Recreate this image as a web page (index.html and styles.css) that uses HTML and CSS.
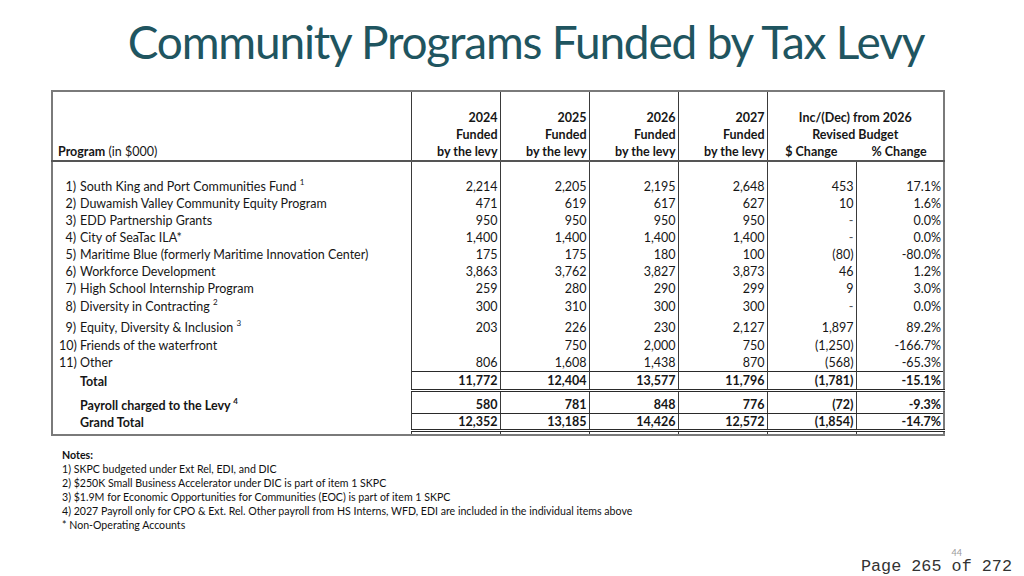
FILE: index.html
```html
<!DOCTYPE html>
<html>
<head>
<meta charset="utf-8">
<link rel="stylesheet" href="styles.css">
</head>
<body>
<div class="slide">
  <header class="title-bar">
    <h1 class="title">Community Programs Funded by Tax Levy</h1>
  </header>

  <table class="levy">
    <colgroup>
      <col class="c-label">
      <col class="c-num"><col class="c-num"><col class="c-num"><col class="c-num"><col class="c-num">
      <col class="c-pct">
    </colgroup>
    <thead>
      <tr class="head">
        <th class="h-label"><b>Program</b> (in $000)</th>
        <th class="h-num"><div>2024</div><div>Funded</div><div>by the levy</div></th>
        <th class="h-num"><div>2025</div><div>Funded</div><div>by the levy</div></th>
        <th class="h-num"><div>2026</div><div>Funded</div><div>by the levy</div></th>
        <th class="h-num"><div>2027</div><div>Funded</div><div>by the levy</div></th>
        <th class="h-chg" colspan="2">
          <div>Inc/(Dec) from 2026</div>
          <div>Revised Budget</div>
          <div class="chg-split"><span>$ Change</span><span>% Change</span></div>
        </th>
      </tr>
    </thead>
    <tbody>
      <tr class="spacer"><td></td><td></td><td></td><td></td><td></td><td></td><td></td></tr>
      <tr><td class="lbl"><span class="n">1)</span>South King and Port Communities Fund <sup>1</sup></td><td>2,214</td><td>2,205</td><td>2,195</td><td>2,648</td><td>453</td><td>17.1%</td></tr>
      <tr><td class="lbl"><span class="n">2)</span>Duwamish Valley Community Equity Program</td><td>471</td><td>619</td><td>617</td><td>627</td><td>10</td><td>1.6%</td></tr>
      <tr><td class="lbl"><span class="n">3)</span>EDD Partnership Grants</td><td>950</td><td>950</td><td>950</td><td>950</td><td class="dash">-</td><td>0.0%</td></tr>
      <tr><td class="lbl"><span class="n">4)</span>City of SeaTac ILA*</td><td>1,400</td><td>1,400</td><td>1,400</td><td>1,400</td><td class="dash">-</td><td>0.0%</td></tr>
      <tr><td class="lbl"><span class="n">5)</span>Maritime Blue (formerly Maritime Innovation Center)</td><td>175</td><td>175</td><td>180</td><td>100</td><td>(80)</td><td>-80.0%</td></tr>
      <tr><td class="lbl"><span class="n">6)</span>Workforce Development</td><td>3,863</td><td>3,762</td><td>3,827</td><td>3,873</td><td>46</td><td>1.2%</td></tr>
      <tr><td class="lbl"><span class="n">7)</span>High School Internship Program</td><td>259</td><td>280</td><td>290</td><td>299</td><td>9</td><td>3.0%</td></tr>
      <tr class="r8"><td class="lbl"><span class="n">8)</span>Diversity in Contracting <sup>2</sup></td><td>300</td><td>310</td><td>300</td><td>300</td><td class="dash">-</td><td>0.0%</td></tr>
      <tr class="r9"><td class="lbl"><span class="n">9)</span>Equity, Diversity &amp; Inclusion <sup>3</sup></td><td>203</td><td>226</td><td>230</td><td>2,127</td><td>1,897</td><td>89.2%</td></tr>
      <tr class="r10"><td class="lbl"><span class="n">10)</span>Friends of the waterfront</td><td></td><td>750</td><td>2,000</td><td>750</td><td>(1,250)</td><td>-166.7%</td></tr>
      <tr><td class="lbl"><span class="n">11)</span>Other</td><td>806</td><td>1,608</td><td>1,438</td><td>870</td><td>(568)</td><td>-65.3%</td></tr>
      <tr class="total"><td class="lbl"><span class="n"></span>Total</td><td>11,772</td><td>12,404</td><td>13,577</td><td>11,796</td><td>(1,781)</td><td>-15.1%</td></tr>
      <tr class="payroll"><td class="lbl"><span class="n"></span>Payroll charged to the Levy <sup>4</sup></td><td>580</td><td>781</td><td>848</td><td>776</td><td>(72)</td><td>-9.3%</td></tr>
      <tr class="grand"><td class="lbl"><span class="n"></span>Grand Total</td><td>12,352</td><td>13,185</td><td>14,426</td><td>12,572</td><td>(1,854)</td><td>-14.7%</td></tr>
      <tr class="tail"><td></td><td></td><td></td><td></td><td></td><td></td><td></td></tr>
    </tbody>
  </table>

  <section class="notes">
    <div class="notes-head">Notes:</div>
    <div>1) SKPC budgeted under Ext Rel, EDI, and DIC</div>
    <div>2) $250K Small Business Accelerator under DIC is part of item 1 SKPC</div>
    <div>3) $1.9M for Economic Opportunities for Communities (EOC) is part of item 1 SKPC</div>
    <div>4) 2027 Payroll only for CPO &amp; Ext. Rel. Other payroll from HS Interns, WFD, EDI are included in the individual items above</div>
    <div>* Non-Operating Accounts</div>
  </section>

  <footer class="footer">
    <div class="slide-no">44</div>
    <div class="page-no">Page 265 of 272</div>
  </footer>
</div>
</body>
</html>
```

FILE: styles.css
```css
* { box-sizing: border-box; }

html, body {
  margin: 0;
  padding: 0;
  background: #ffffff;
}

.slide {
  width: 1024px;
  height: 576px;
  overflow: hidden;
  display: flex;
  flex-direction: column;
  font-family: "Lato", "Liberation Sans", sans-serif;
  color: #161616;
}

.title-bar {
  height: 90px;
  display: flex;
  justify-content: center;
  padding-left: 28px;
  padding-top: 13px;
}

.title {
  margin: 0;
  font-family: "Lato", "Liberation Sans", sans-serif;
  font-weight: 400;
  font-size: 46px;
  line-height: 58px;
  letter-spacing: -1.2px;
  color: #1f5560;
}

/* ---------- table ---------- */
.levy {
  margin-left: 51px;
  width: 892px;
  table-layout: fixed;
  border-collapse: collapse;
  border: 2px solid #7a7a7a;
  font-size: 12.5px;
}

.c-label { width: 359px; }
.c-num { width: 89px; }
.c-pct { width: 88px; }

.levy th,
.levy td {
  padding: 0 2px 0 0;
  border-left: 1px solid #3a3a3a;
  border-right: 1px solid #3a3a3a;
  text-align: right;
  white-space: nowrap;
  line-height: 17px;
}

.head th {
  height: 70px;
  vertical-align: bottom;
  font-weight: 700;
  padding-bottom: 0;
  border-bottom: 2px solid #555;
}

.head .h-label {
  text-align: left;
  font-weight: 400;
  padding-left: 5px;
}

.head .h-chg {
  text-align: center;
  padding-right: 0;
}

.chg-split {
  display: flex;
}

.chg-split span {
  flex: 1;
  text-align: center;
}

.spacer td { height: 16px; }

.levy tbody td { height: 17px; vertical-align: middle; }

.levy .lbl {
  text-align: left;
  padding-left: 6px;
}

.lbl .n {
  display: inline-block;
  width: 17px;
  text-align: right;
  margin-right: 4px;
}

.lbl sup {
  font-size: 8px;
  line-height: 0;
  vertical-align: 6px;
}

.dash { color: #555; }

.levy tr.r8 td { height: 18px; vertical-align: bottom; }
.levy tr.r9 td { height: 21px; vertical-align: bottom; }
.levy tr.r10 td { height: 18px; vertical-align: bottom; }

.total td,
.payroll td,
.grand td { font-weight: 700; }

.levy tr.total td { height: 19px; vertical-align: middle; }
.levy tr.total td:not(.lbl) {
  border-top: 1px solid #2a2a2a;
  border-bottom: 3px double #2a2a2a;
}

.levy tr.payroll td { height: 23px; vertical-align: bottom; }
.levy tr.payroll td:not(.lbl) { border-bottom: 1px solid #2a2a2a; }

.levy tr.grand td { height: 15px; line-height: 15px; }
.levy tr.grand td:not(.lbl) { border-bottom: 3px double #2a2a2a; }

.levy tr.tail td { height: 4px; }

/* ---------- notes ---------- */
.notes {
  margin-top: 12px;
  margin-left: 62px;
  font-size: 10.6px;
  line-height: 14px;
  color: #111;
}

.notes-head { font-weight: 700; }

/* ---------- footer ---------- */
.footer {
  margin-top: auto;
  align-self: flex-end;
  padding-right: 12px;
  padding-bottom: 1px;
  text-align: right;
}

.slide-no {
  font-family: "Lato", "Liberation Sans", sans-serif;
  font-size: 9px;
  line-height: 10px;
  color: #9a9a9a;
  padding-right: 50px;
}

.page-no {
  font-family: "Liberation Mono", "DejaVu Sans Mono", monospace;
  font-size: 16.8px;
  line-height: 17px;
  color: #333;
}
```
